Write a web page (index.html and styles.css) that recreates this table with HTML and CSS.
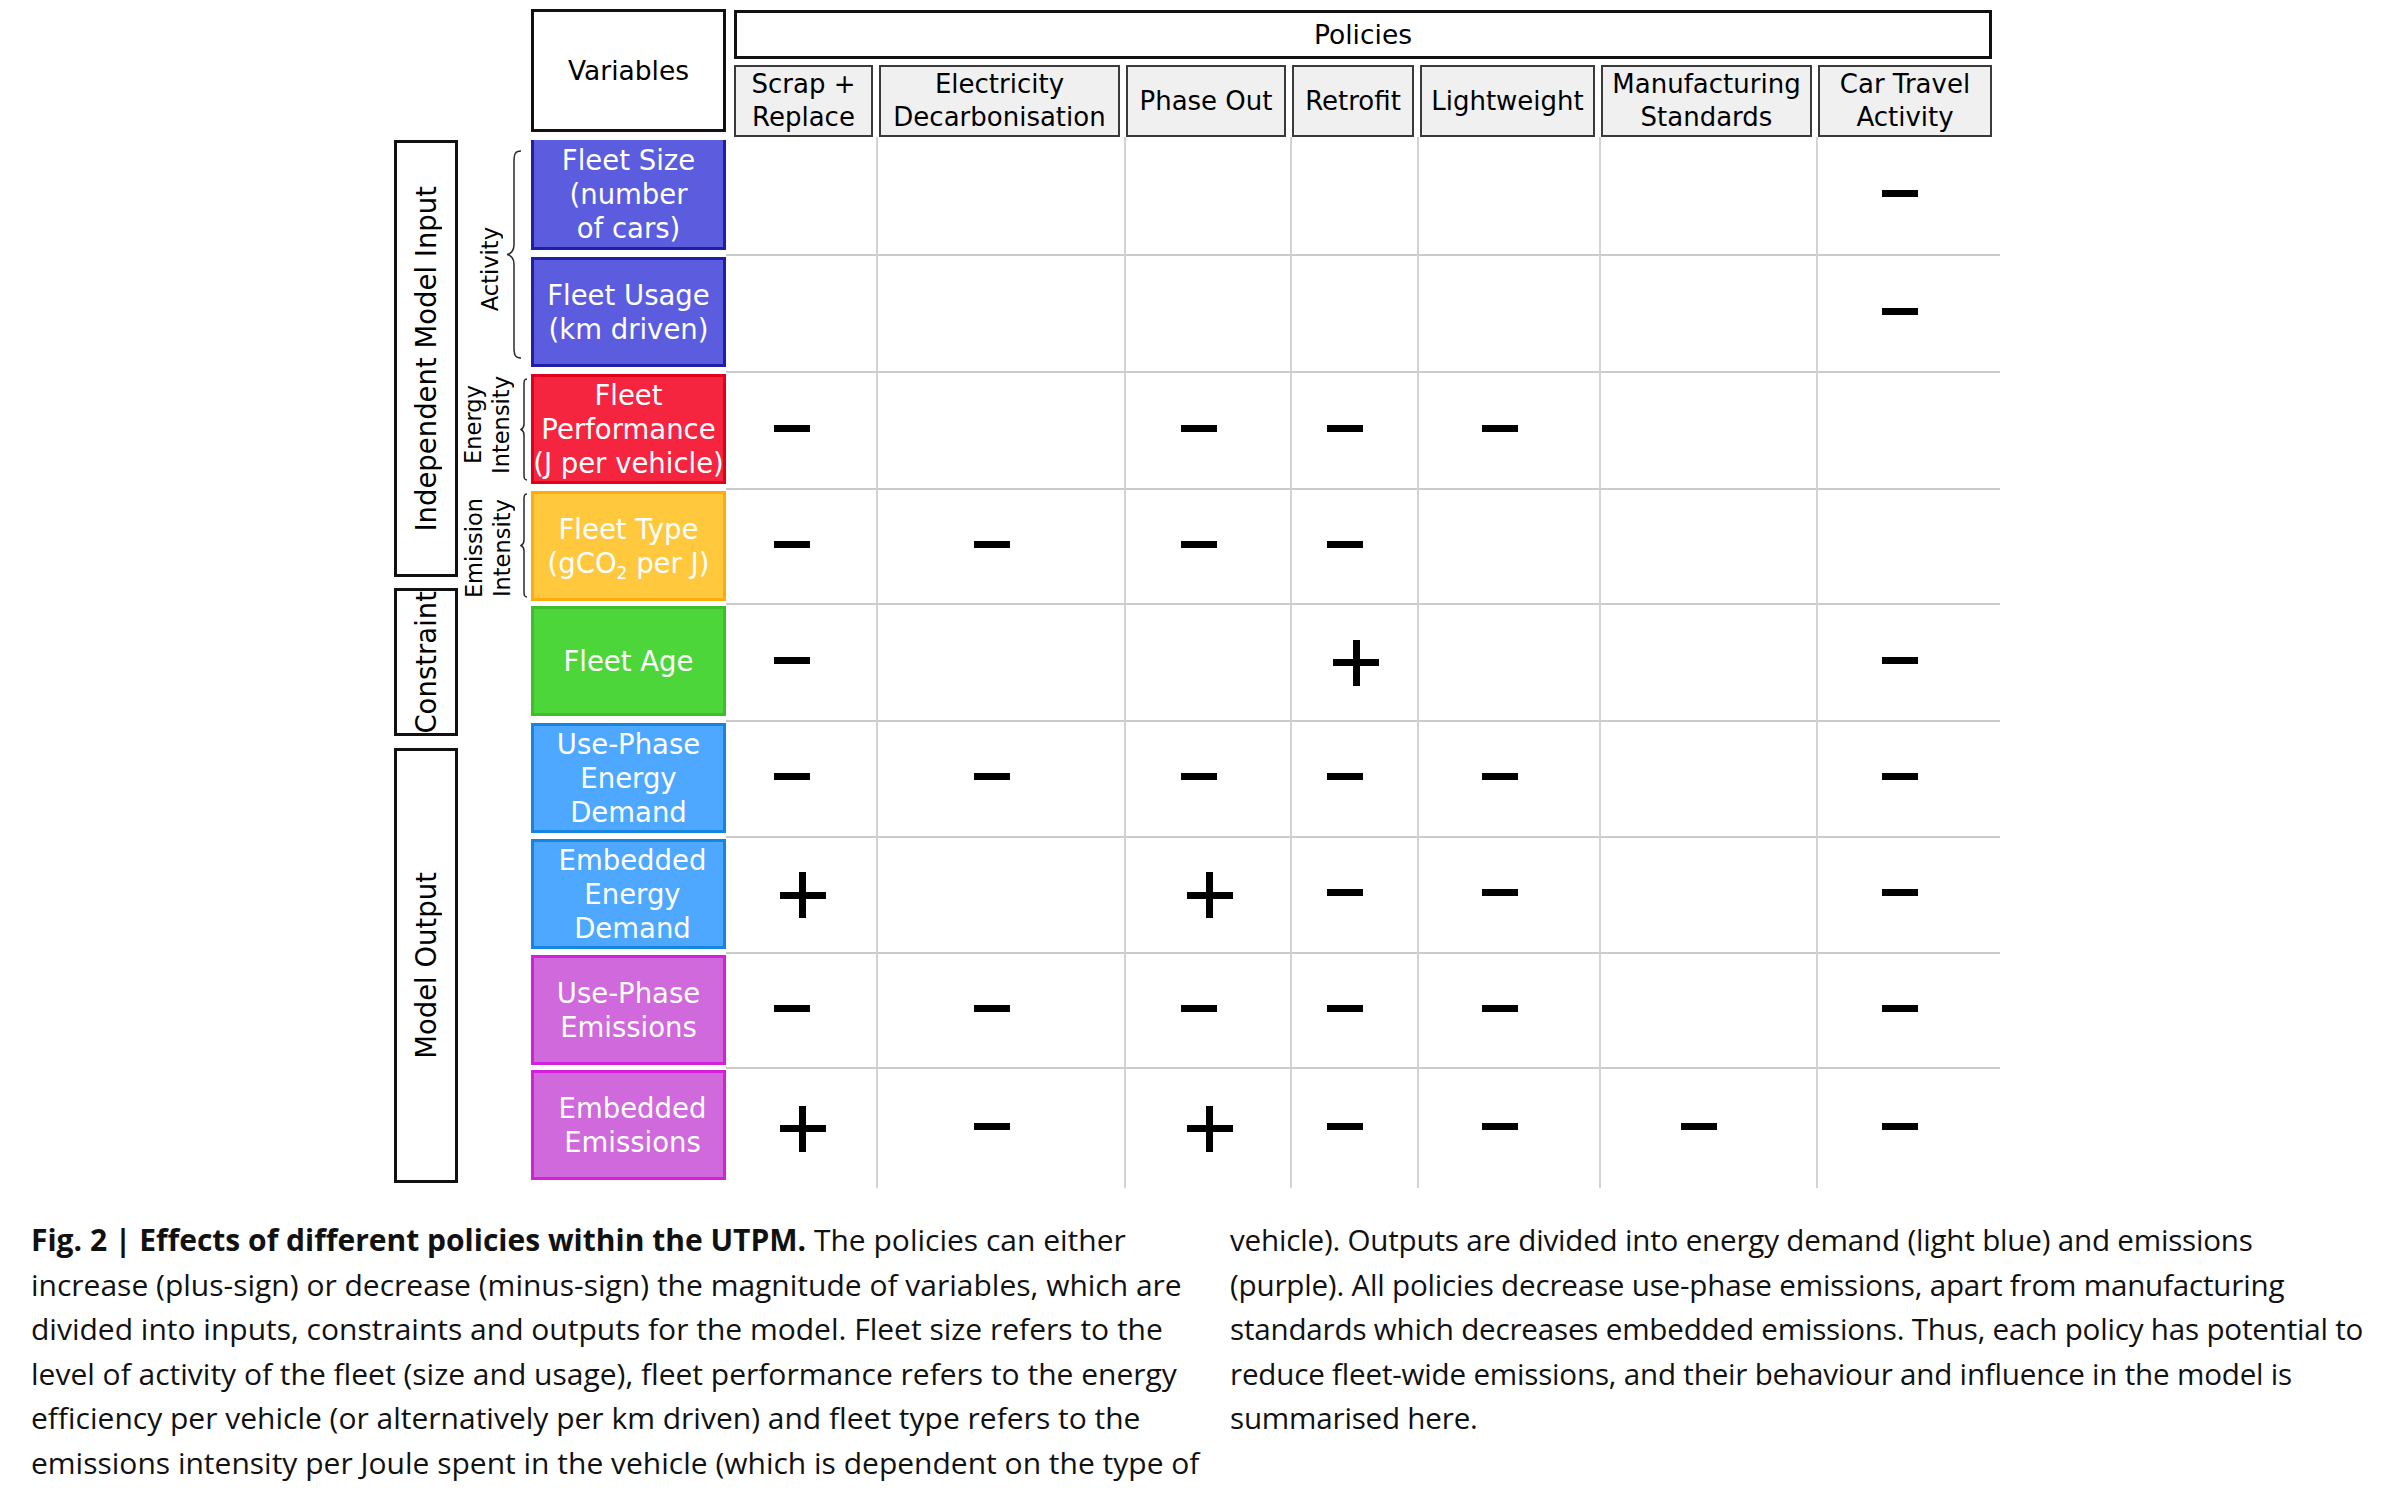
FILE: index.html
```html
<!DOCTYPE html>
<html lang="en">
<head>
<meta charset="utf-8">
<title>Effects of different policies within the UTPM</title>
<link rel="stylesheet" href="styles.css">
</head>
<body>
<div class="page">
  <div class="diagram">
    <div class="head">
      <div class="head-spacer"></div>
      <div class="var-title">Variables</div>
      <div class="policies">
        <div class="policies-title">Policies</div>
        <div class="policy-heads">
          <div class="ph"><span>Scrap +<br>Replace</span></div>
          <div class="ph"><span>Electricity<br>Decarbonisation</span></div>
          <div class="ph"><span>Phase Out</span></div>
          <div class="ph"><span>Retrofit</span></div>
          <div class="ph"><span>Lightweight</span></div>
          <div class="ph"><span>Manufacturing<br>Standards</span></div>
          <div class="ph"><span>Car Travel<br>Activity</span></div>
        </div>
      </div>
    </div>

    <div class="body">
      <div class="side">
        <div class="side-box sb-input"><span>Independent Model Input</span></div>
        <div class="side-box sb-constraint"><span>Constraint</span></div>
        <div class="side-box sb-output"><span>Model Output</span></div>
      </div>

      <div class="sub">
        <div class="sub-item sub-activity">
          <span class="sub-label activity-label">Activity</span>
          <svg class="brace brace-wide" width="16" height="209" viewBox="0 0 16 209"><path d="M15,1 C9,1 8,4 8,12 L8,95 C8,100 5,104 1,104.5 C5,105 8,109 8,114 L8,197 C8,205 9,208 15,208"/></svg>
        </div>
        <div class="sub-item sub-energy">
          <span class="sub-label">Energy<br>Intensity</span>
          <svg class="brace brace-narrow" width="8" height="103" viewBox="0 0 8 103"><path d="M7,1 C4,1 4,3 4,8 L4,46 C4,49 2,51 1,51.5 C2,52 4,54 4,57 L4,95 C4,100 4,102 7,102"/></svg>
        </div>
        <div class="sub-item sub-emission">
          <span class="sub-label">Emission<br>Intensity</span>
          <svg class="brace brace-narrow" width="8" height="105" viewBox="0 0 8 105"><path d="M7,1 C4,1 4,3 4,8 L4,47 C4,50 2,52 1,52.5 C2,53 4,55 4,58 L4,97 C4,102 4,104 7,104"/></svg>
        </div>
      </div>

      <div class="grid">
        <div class="var v-blue"><span>Fleet Size<br>(number<br>of cars)</span></div>
        <div class="cell"></div><div class="cell"></div><div class="cell"></div><div class="cell"></div><div class="cell"></div><div class="cell"></div><div class="cell"><i class="minus"></i></div>

        <div class="var v-blue"><span>Fleet Usage<br>(km driven)</span></div>
        <div class="cell"></div><div class="cell"></div><div class="cell"></div><div class="cell"></div><div class="cell"></div><div class="cell"></div><div class="cell"><i class="minus"></i></div>

        <div class="var v-red"><span>Fleet<br>Performance<br>(J per vehicle)</span></div>
        <div class="cell"><i class="minus"></i></div><div class="cell"></div><div class="cell"><i class="minus"></i></div><div class="cell"><i class="minus"></i></div><div class="cell"><i class="minus"></i></div><div class="cell"></div><div class="cell"></div>

        <div class="var v-yellow"><span>Fleet Type<br>(gCO<sub>2</sub> per J)</span></div>
        <div class="cell"><i class="minus"></i></div><div class="cell"><i class="minus"></i></div><div class="cell"><i class="minus"></i></div><div class="cell"><i class="minus"></i></div><div class="cell"></div><div class="cell"></div><div class="cell"></div>

        <div class="var v-green"><span>Fleet Age</span></div>
        <div class="cell"><i class="minus"></i></div><div class="cell"></div><div class="cell"></div><div class="cell"><i class="plus"></i></div><div class="cell"></div><div class="cell"></div><div class="cell"><i class="minus"></i></div>

        <div class="var v-lblue"><span>Use-Phase<br>Energy<br>Demand</span></div>
        <div class="cell"><i class="minus"></i></div><div class="cell"><i class="minus"></i></div><div class="cell"><i class="minus"></i></div><div class="cell"><i class="minus"></i></div><div class="cell"><i class="minus"></i></div><div class="cell"></div><div class="cell"><i class="minus"></i></div>

        <div class="var v-lblue"><span class="shift">Embedded<br>Energy<br>Demand</span></div>
        <div class="cell"><i class="plus"></i></div><div class="cell"></div><div class="cell"><i class="plus"></i></div><div class="cell"><i class="minus"></i></div><div class="cell"><i class="minus"></i></div><div class="cell"></div><div class="cell"><i class="minus"></i></div>

        <div class="var v-purple"><span>Use-Phase<br>Emissions</span></div>
        <div class="cell"><i class="minus"></i></div><div class="cell"><i class="minus"></i></div><div class="cell"><i class="minus"></i></div><div class="cell"><i class="minus"></i></div><div class="cell"><i class="minus"></i></div><div class="cell"></div><div class="cell"><i class="minus"></i></div>

        <div class="var v-purple"><span class="shift">Embedded<br>Emissions</span></div>
        <div class="cell"><i class="plus"></i></div><div class="cell"><i class="minus"></i></div><div class="cell"><i class="plus"></i></div><div class="cell"><i class="minus"></i></div><div class="cell"><i class="minus"></i></div><div class="cell"><i class="minus"></i></div><div class="cell"><i class="minus"></i></div>
      </div>
    </div>
  </div>

  <div class="caption">
    <p class="cap-col cap-left"><b>Fig. 2 | Effects of different policies within the UTPM.</b> The policies can either<br>increase (plus-sign) or decrease (minus-sign) the magnitude of variables, which are<br>divided into inputs, constraints and outputs for the model. Fleet size refers to the<br>level of activity of the fleet (size and usage), fleet performance refers to the energy<br>efficiency per vehicle (or alternatively per km driven) and fleet type refers to the<br>emissions intensity per Joule spent in the vehicle (which is dependent on the type of</p>
    <p class="cap-col cap-right">vehicle). Outputs are divided into energy demand (light blue) and emissions<br>(purple). All policies decrease use-phase emissions, apart from manufacturing<br>standards which decreases embedded emissions. Thus, each policy has potential to<br>reduce fleet-wide emissions, and their behaviour and influence in the model is<br>summarised here.</p>
  </div>
</div>
</body>
</html>
```

FILE: styles.css
```css
* { box-sizing: border-box; }

html, body {
  margin: 0;
  padding: 0;
  background: #ffffff;
}

body {
  font-family: "DejaVu Sans", Verdana, sans-serif;
  color: #000;
}

.page {
  width: 2394px;
  height: 1495px;
  overflow: hidden;
}

/* ---------- diagram ---------- */
.diagram {
  padding: 9px 0 0 394px;
}

.head {
  display: flex;
  height: 128px;
}

.head-spacer {
  flex: none;
  width: 137px;
}

.var-title {
  flex: none;
  width: 195px;
  height: 123px;
  border: 3px solid #111;
  display: flex;
  align-items: center;
  justify-content: center;
  font-size: 26.5px;
}

.policies {
  flex: none;
  width: 1274px;
  padding-left: 8px;
}

.policies-title {
  margin-top: 1px;
  width: 1258px;
  height: 49px;
  border: 3px solid #111;
  display: flex;
  align-items: center;
  justify-content: center;
  font-size: 26.5px;
}

.policy-heads {
  display: grid;
  grid-template-columns: 139px 241px 160px 122px 175px 211px 174px;
  column-gap: 6px;
  margin-top: 6px;
}

.ph {
  height: 72px;
  background: #f0f0f0;
  border: 2px solid #3a3a3a;
  display: flex;
  align-items: center;
  justify-content: center;
  text-align: center;
  font-size: 26px;
  line-height: 33px;
  white-space: nowrap;
}

.body {
  display: flex;
}

/* side group labels */
.side {
  flex: none;
  width: 64px;
  display: flex;
  flex-direction: column;
  padding-top: 3px;
}

.side-box {
  border: 3px solid #111;
  display: flex;
  align-items: center;
  justify-content: center;
}

.side-box span {
  writing-mode: vertical-rl;
  transform: rotate(180deg);
  font-size: 27.5px;
  white-space: nowrap;
}

.sb-input { height: 437px; }
.sb-constraint { height: 148px; margin-top: 11px; }
.sb-output { height: 435px; margin-top: 12px; }

/* sub labels with braces */
.sub {
  flex: none;
  width: 73px;
  display: flex;
  flex-direction: column;
}

.sub-item {
  display: flex;
  align-items: center;
  justify-content: flex-end;
}

.sub-activity { height: 234px; padding-right: 9px; }
.sub-energy { height: 117px; padding-right: 3px; }
.sub-emission { height: 115px; padding-right: 3px; }

.sub-label {
  writing-mode: vertical-rl;
  transform: rotate(180deg);
  font-size: 22.5px;
  line-height: 28px;
  text-align: center;
  white-space: nowrap;
}

.activity-label {
  margin-top: 30px;
  margin-right: 2px;
}

.sub-energy .sub-label { margin-bottom: 10px; margin-right: 5px; }
.sub-emission .sub-label { margin-top: 6px; margin-right: 4px; }

.brace { flex: none; display: block; }
.brace path {
  fill: none;
  stroke: #2a2a2a;
  stroke-width: 1.5;
}

/* main matrix */
.grid {
  display: grid;
  grid-template-columns: 195px 150px 248px 166px 127px 182px 217px 184px;
  grid-template-rows: 117px 117px 117px 115px 117px 116px 116px 115px 121px;
}

.var {
  margin-top: 3px;
  height: 110px;
  border: 3px solid;
  color: #fff;
  font-size: 27.5px;
  line-height: 34px;
  text-align: center;
  white-space: nowrap;
  display: flex;
  align-items: center;
  justify-content: center;
}

.var .shift {
  margin-left: 8px;
}

.var sub {
  font-size: 17px;
  line-height: 0;
  vertical-align: -6px;
}

.v-blue   { background: #5c5cdf; border-color: #1e1ea6; }
.v-red    { background: #f5253f; border-color: #e0001c; }
.v-yellow { background: #ffc83d; border-color: #ffab0a; }
.v-green  { background: #4dd639; border-color: #3fbd2b; }
.v-lblue  { background: #4ea8ff; border-color: #1685e2; }
.v-purple { background: #d069dc; border-color: #d41fdd; }

.cell {
  border-top: 2px solid #cbcbcb;
  border-left: 2px solid #d3d3d3;
  display: flex;
  align-items: center;
  justify-content: center;
}

.grid > :nth-child(8n+2) { border-left: none; }
.grid > :nth-child(-n+8) { border-top: none; }

.minus {
  display: block;
  width: 36px;
  height: 7px;
  background: #000;
  margin: 0 19px 5px 0;
}

.plus {
  display: block;
  width: 46px;
  height: 46px;
  margin-left: 3px;
  background:
    linear-gradient(#000, #000) center / 46px 7px no-repeat,
    linear-gradient(#000, #000) center / 7px 46px no-repeat;
}

/* ---------- caption ---------- */
.caption {
  display: flex;
  padding-left: 31px;
  margin-top: 30px;
  font-family: "Open Sans", Lato, sans-serif;
  font-size: 30px;
  line-height: 44.5px;
  color: #111;
}

.cap-col {
  margin: 0;
  white-space: nowrap;
}

.cap-left {
  flex: none;
  width: 1199px;
}

.cap-left b {
  font-weight: 700;
}

.cap-right {
  font-size: 29.6px;
  letter-spacing: -0.2px;
}
```
